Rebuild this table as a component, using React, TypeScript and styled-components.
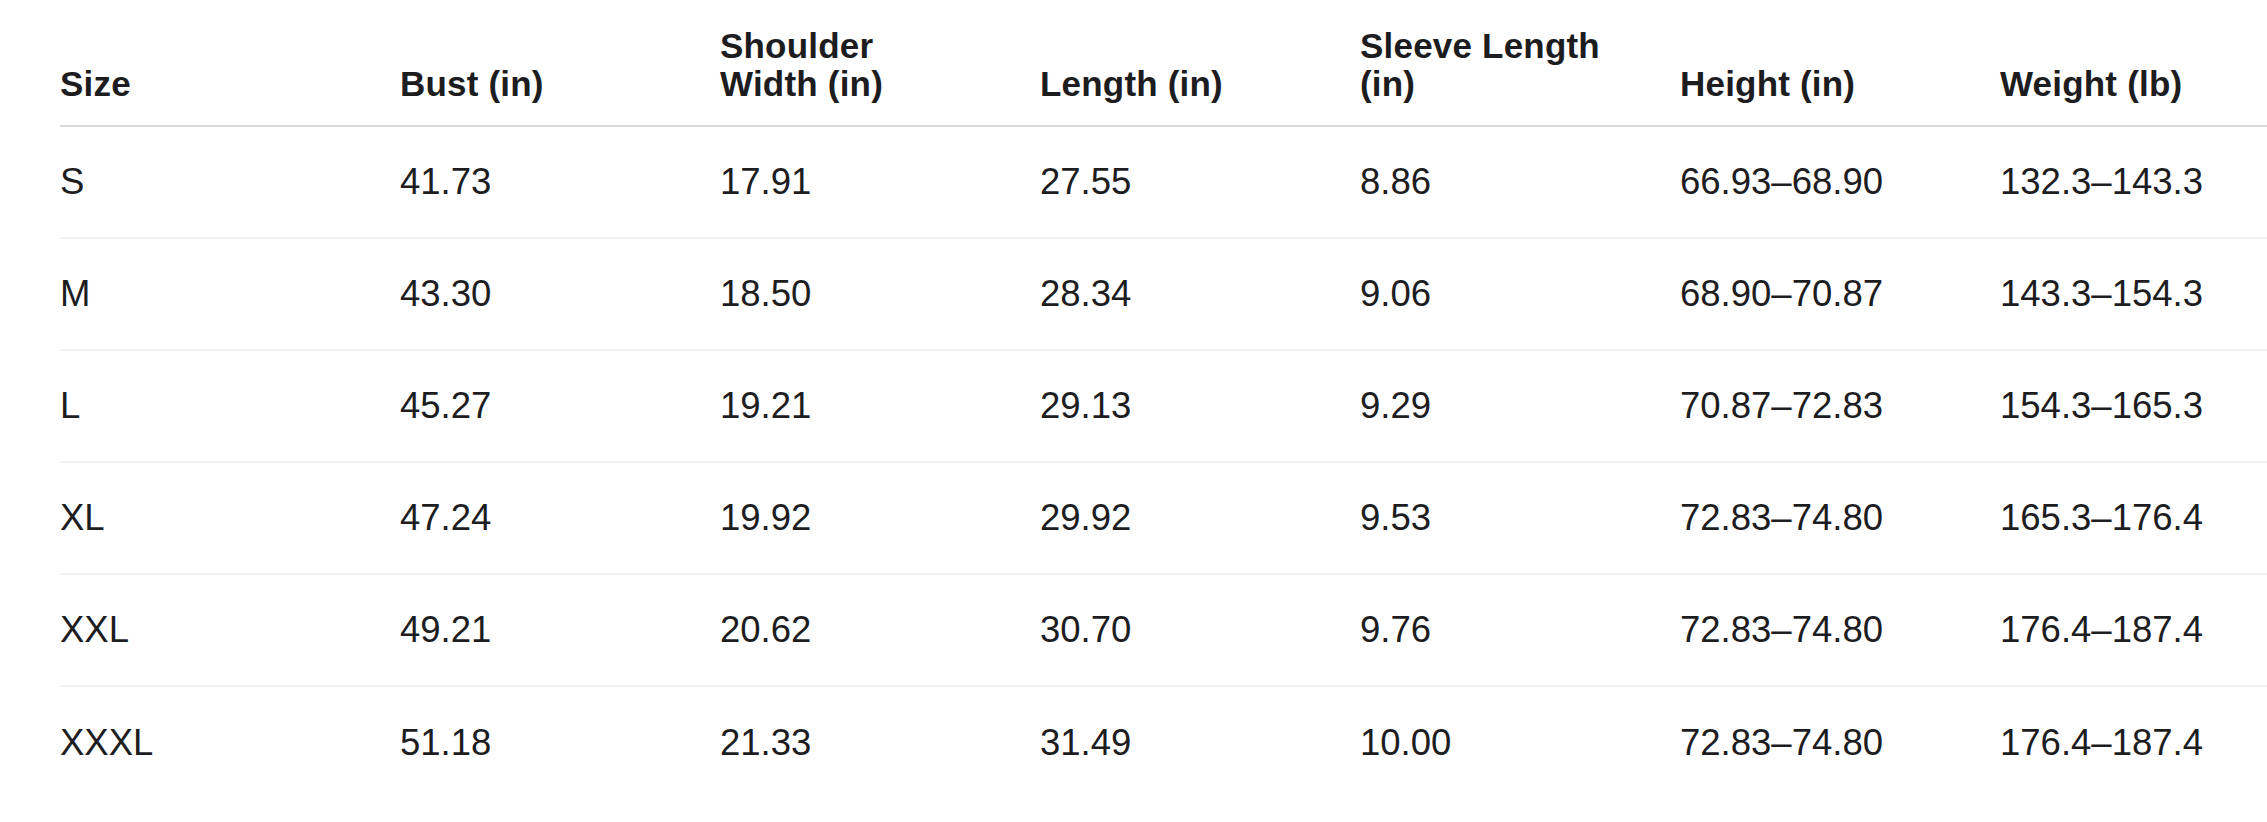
import styled, { createGlobalStyle } from 'styled-components'

const GlobalStyle = createGlobalStyle`
  html, body {
    margin: 0;
    padding: 0;
    background: #ffffff;
    overflow: hidden;
  }
  body {
    font-family: 'Liberation Sans', Arial, sans-serif;
    color: #1d1d1f;
  }
`

const Page = styled.div`
  padding-left: 60px;
  overflow: hidden;
`

const Table = styled.table`
  border-collapse: collapse;
  table-layout: fixed;
  width: 2260px;
`

const Col = styled.col<{ $width: number }>`
  width: ${(p) => p.$width}px;
`

const HeadCell = styled.th`
  text-align: left;
  vertical-align: bottom;
  font-size: 35px;
  font-weight: 700;
  line-height: 38px;
  letter-spacing: 0.2px;
  padding: 27px 70px 22px 0;
  border-bottom: 2px solid #d9d9d9;
`

const Row = styled.tr`
  & + & td {
    border-top: 2px solid #f2f2f2;
  }
`

const Cell = styled.td`
  font-size: 36.5px;
  font-weight: 400;
  line-height: 44px;
  height: 112px;
  padding: 0;
  vertical-align: middle;
  box-sizing: border-box;
`

const headers = [
  'Size',
  'Bust (in)',
  'Shoulder Width (in)',
  'Length (in)',
  'Sleeve Length (in)',
  'Height (in)',
  'Weight (lb)',
]

const widths = [340, 320, 320, 320, 320, 320, 320]

const rows = [
  ['S', '41.73', '17.91', '27.55', '8.86', '66.93–68.90', '132.3–143.3'],
  ['M', '43.30', '18.50', '28.34', '9.06', '68.90–70.87', '143.3–154.3'],
  ['L', '45.27', '19.21', '29.13', '9.29', '70.87–72.83', '154.3–165.3'],
  ['XL', '47.24', '19.92', '29.92', '9.53', '72.83–74.80', '165.3–176.4'],
  ['XXL', '49.21', '20.62', '30.70', '9.76', '72.83–74.80', '176.4–187.4'],
  ['XXXL', '51.18', '21.33', '31.49', '10.00', '72.83–74.80', '176.4–187.4'],
]

const App: React.FC = () => {
  return (
    <>
      <GlobalStyle />
      <Page>
        <Table>
          <colgroup>
            {widths.map((w, i) => (
              <Col key={i} $width={w} />
            ))}
          </colgroup>
          <thead>
            <tr>
              {headers.map((h) => (
                <HeadCell key={h}>{h}</HeadCell>
              ))}
            </tr>
          </thead>
          <tbody>
            {rows.map((r) => (
              <Row key={r[0]}>
                {r.map((v, i) => (
                  <Cell key={i}>{v}</Cell>
                ))}
              </Row>
            ))}
          </tbody>
        </Table>
      </Page>
    </>
  )
}

export default App
